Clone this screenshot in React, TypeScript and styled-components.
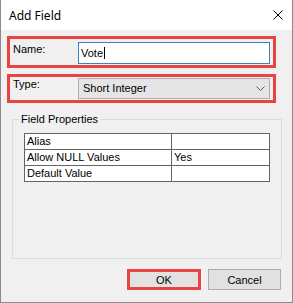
import { Fragment } from "react";
import styled, { createGlobalStyle } from "styled-components";

const GlobalStyle = createGlobalStyle`
  html, body {
    margin: 0;
    padding: 0;
    background: #ffffff;
  }
  body {
    font-family: "Liberation Sans", Arial, sans-serif;
    font-size: 11px;
    color: #000;
  }
`;

const Dialog = styled.div`
  width: 293px;
  height: 303px;
  box-sizing: border-box;
  display: flex;
  flex-direction: column;
  border: 1px solid #8a8a8a;
  border-top: none;
  background: #f0f0f0;
`;

const TitleBar = styled.div`
  height: 30px;
  flex: none;
  background: #ffffff;
  display: flex;
  align-items: center;
  justify-content: space-between;
  padding: 0 9px 0 8px;
`;

const Title = styled.span`
  font-family: "Noto Sans", "Open Sans", sans-serif;
  font-size: 12px;
  line-height: 16px;
  margin-top: 1px;
`;

const CloseButton = styled.button`
  border: none;
  background: none;
  padding: 0;
  width: 10px;
  height: 10px;
  display: flex;
  cursor: pointer;
`;

const Body = styled.div`
  flex: 1;
  display: flex;
  flex-direction: column;
  padding: 6px 10px 12px 6px;
`;

const FieldRow = styled.div<{ $gap?: number; $padTop: number }>`
  display: flex;
  align-items: flex-start;
  margin: ${(p) => p.$gap ?? 0}px 6px 0 0;
  padding: ${(p) => p.$padTop}px 3px 1px 3px;
  border: 3px solid #e84444;
`;

const Label = styled.label<{ $offset?: number }>`
  width: 65px;
  flex: none;
  line-height: 13px;
  padding-top: ${(p) => p.$offset ?? 0}px;
`;

const TextBox = styled.div`
  flex: 1;
  height: 22px;
  box-sizing: border-box;
  border: 1px solid #3d7fc0;
  background: #ffffff;
  padding-left: 2px;
  line-height: 20px;
`;

const Caret = styled.span`
  display: inline-block;
  width: 1px;
  height: 12px;
  background: #000;
  vertical-align: -2px;
  margin-left: 1px;
`;

const Select = styled.div`
  flex: 1;
  height: 21px;
  box-sizing: border-box;
  border: 1px solid #adadad;
  background: #e5e5e5;
  display: flex;
  align-items: center;
  justify-content: space-between;
  padding: 0 4px 0 4px;
  line-height: 19px;
`;

const Group = styled.fieldset`
  flex: 1;
  margin: 10px 0 0 5px;
  padding: 7px 11px 0 11px;
  border: 1px solid #dcdcdc;
  min-width: 0;
`;

const Legend = styled.legend`
  margin-left: -5px;
  padding: 0 2px;
  line-height: 13px;
`;

const PropTable = styled.div`
  display: grid;
  grid-template-columns: 147px 98px;
  border-left: 1px solid #646464;
  border-top: 1px solid #646464;
  background: #ffffff;
`;

const Cell = styled.div`
  height: 16px;
  box-sizing: border-box;
  border-right: 1px solid #646464;
  border-bottom: 1px solid #646464;
  padding-left: 2px;
  line-height: 15px;
  white-space: nowrap;
`;

const ButtonRow = styled.div`
  display: flex;
  justify-content: flex-end;
  gap: 7px;
  margin: 10px 1px 0 0;
`;

const DialogButton = styled.button<{ $highlight?: boolean }>`
  width: ${(p) => (p.$highlight ? 74 : 73)}px;
  height: 21px;
  box-sizing: border-box;
  border: ${(p) => (p.$highlight ? "3px solid #e84444" : "1px solid #adadad")};
  background: #e1e1e1;
  font-family: "Liberation Sans", Arial, sans-serif;
  font-size: 11px;
  color: #000;
  padding: 0;
`;

const properties = [
  { name: "Alias", value: "" },
  { name: "Allow NULL Values", value: "Yes" },
  { name: "Default Value", value: "" },
];

export default function App() {
  return (
    <>
      <GlobalStyle />
      <Dialog>
        <TitleBar>
          <Title>Add Field</Title>
          <CloseButton aria-label="Close">
            <svg width="10" height="10" viewBox="0 0 10 10">
              <path d="M0.5 0.5 L9.5 9.5 M9.5 0.5 L0.5 9.5" stroke="#000" strokeWidth="1" fill="none" />
            </svg>
          </CloseButton>
        </TitleBar>
        <Body>
          <FieldRow $padTop={3}>
            <Label $offset={1}>Name:</Label>
            <TextBox>
              Vote<Caret />
            </TextBox>
          </FieldRow>
          <FieldRow $gap={6} $padTop={1}>
            <Label>Type:</Label>
            <Select>
              <span>Short Integer</span>
              <svg width="9" height="5" viewBox="0 0 9 5">
                <path d="M0.5 0.5 L4.5 4.5 L8.5 0.5" stroke="#5a5a5a" strokeWidth="1" fill="none" />
              </svg>
            </Select>
          </FieldRow>
          <Group>
            <Legend>Field Properties</Legend>
            <PropTable>
              {properties.map((p) => (
                <Fragment key={p.name}>
                  <Cell>{p.name}</Cell>
                  <Cell>{p.value}</Cell>
                </Fragment>
              ))}
            </PropTable>
          </Group>
          <ButtonRow>
            <DialogButton $highlight>OK</DialogButton>
            <DialogButton>Cancel</DialogButton>
          </ButtonRow>
        </Body>
      </Dialog>
    </>
  );
}
